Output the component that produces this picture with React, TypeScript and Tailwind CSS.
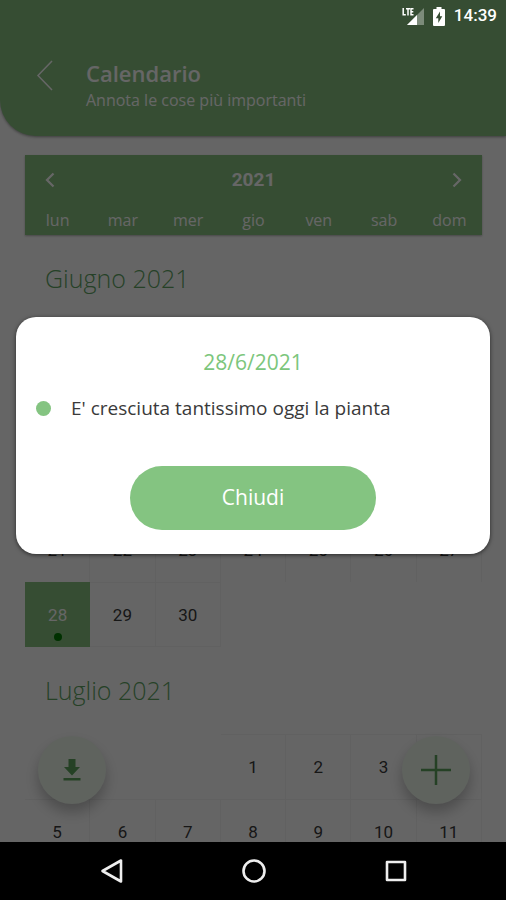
const WEEKDAYS = ["lun", "mar", "mer", "gio", "ven", "sab", "dom"];

type Month = { name: string; offset: number; days: number; selected?: number };

const MONTHS: Month[] = [
  { name: "Giugno 2021", offset: 1, days: 30, selected: 28 },
  { name: "Luglio 2021", offset: 3, days: 31 },
];

function weeksOf(month: Month): (number | null)[][] {
  const rows = Math.ceil((month.offset + month.days) / 7);
  return Array.from({ length: rows }, (_, row) =>
    Array.from({ length: 7 }, (_, col) => {
      const day = row * 7 + col - month.offset + 1;
      return day >= 1 && day <= month.days ? day : null;
    }),
  );
}

function StatusBar() {
  return (
    <div className="absolute inset-x-0 top-0 z-20 flex h-8 items-center justify-end gap-[9px] pr-[9px] text-white">
      <svg width="22" height="19" viewBox="0 0 22 19" aria-label="LTE" role="img">
        <path d="M22 1v17H5z" fill="#fff" fillOpacity="0.35" />
        <path d="M15 8v10H5z" fill="#fff" />
        <path d="M1.200 1v6.800h2.600M4 1.700h4M6 1.700v6.900M11.500 1.700H9v6.100h2.500M9 4.700h2.300" fill="none" stroke="#fff" strokeWidth="1.500" />
      </svg>
      <svg width="12" height="19" viewBox="0 0 12 19" aria-label="Batteria in carica" role="img">
        <path d="M3.500 0h5v2H11q1 0 1 1v15q0 1-1 1H1q-1 0-1-1V3q0-1 1-1h2.500z" fill="#fff" />
        <path d="M7 4.500 2.800 11.300h2.500v4.700l4-6.800H7z" fill="#364d33" />
      </svg>
      <span className="font-[Roboto] text-[17px] font-medium">14:39</span>
    </div>
  );
}

function Header() {
  return (
    <header className="flex h-[136px] shrink-0 items-start rounded-bl-[36px] bg-[#87c180] pt-[60px] pl-9 text-white shadow-[0_1px_3px_rgba(0,0,0,0.4)]">
      <button type="button" aria-label="Indietro" className="mr-8 h-8 w-[18px]">
        <svg width="18" height="32" viewBox="0 0 18 32" fill="none" stroke="currentColor" strokeWidth="1.500">
          <path d="M16 1 2 15.500 16 30" />
        </svg>
      </button>
      <div>
        <h1 className="text-[22px] leading-[26px] font-semibold">Calendario</h1>
        <p className="text-base leading-7">Annota le cose più importanti</p>
      </div>
    </header>
  );
}

function MonthTable({ month }: { month: Month }) {
  const weeks = weeksOf(month);
  return (
    <section>
      <h2 className="flex h-[87px] items-center pl-5 text-[25px] font-light text-[#5fa463]">{month.name}</h2>
      <table
        aria-label={month.name}
        className="w-full table-fixed border-separate border-spacing-0 font-[Roboto] text-[17px] text-[#3a3a3a]"
      >
        <tbody>
          {weeks.map((week, i) => (
            <tr key={i}>
              {week.map((day, j) => (
                <td
                  key={j}
                  className={
                    day === null
                      ? "h-[65px] p-0"
                      : day === month.selected
                        ? "h-[65px] bg-[#87c180] p-0 text-white"
                        : "h-[65px] border-t border-r border-[#f2f2f2] p-0"
                  }
                >
                  {day !== null && (
                    <button
                      type="button"
                      className={
                        i === weeks.length - 1 && day !== month.selected
                          ? "block h-16 w-full border-b border-[#f2f2f2] pt-0.5 text-center"
                          : "relative block h-16 w-full pt-0.5 text-center"
                      }
                    >
                      {day}
                      {day === month.selected && (
                        <span className="absolute bottom-1.5 left-1/2 size-2 -translate-x-1/2 rounded-full bg-[#007a00]" />
                      )}
                    </button>
                  )}
                </td>
              ))}
            </tr>
          ))}
        </tbody>
      </table>
    </section>
  );
}

function Calendar() {
  return (
    <main className="mt-[19px] pr-6 pl-[25px]">
      <div className="flex h-20 flex-col bg-[#87c180] text-white shadow-[0_1px_2px_rgba(0,0,0,0.3)]">
        <div className="flex h-[50px] items-center justify-between px-[18px]">
          <button type="button" aria-label="Anno precedente">
            <svg width="14" height="18" viewBox="0 0 14 18" fill="none" stroke="currentColor" strokeWidth="2.200">
              <path d="M10.500 2.500 4 9l6.500 6.500" />
            </svg>
          </button>
          <span className="font-[Roboto] text-[19px] font-bold">2021</span>
          <button type="button" aria-label="Anno successivo">
            <svg width="14" height="18" viewBox="0 0 14 18" fill="none" stroke="currentColor" strokeWidth="2.200">
              <path d="M3.500 2.500 10 9l-6.500 6.500" />
            </svg>
          </button>
        </div>
        <div className="grid h-[30px] grid-cols-7 items-center text-center text-base leading-[30px]">
          {WEEKDAYS.map((d) => (
            <span key={d}>{d}</span>
          ))}
        </div>
      </div>
      {MONTHS.map((m) => (
        <MonthTable key={m.name} month={m} />
      ))}
    </main>
  );
}

function FloatingActions() {
  return (
    <div className="absolute inset-x-0 bottom-[38px] flex justify-between pr-9 pl-[38px] text-[#5ca45c]">
      <button type="button" aria-label="Scarica" className="flex size-[68px] items-center justify-center rounded-full bg-[#eef7ec] shadow-[0_8px_14px_rgba(0,0,0,0.25)]">
        <svg width="18" height="22" viewBox="0 0 18 22" fill="currentColor">
          <path d="M5.500 0h7v8H17l-8 8.500L1 8h4.500zM.5 19h17v2.500H.5z" />
        </svg>
      </button>
      <button type="button" aria-label="Aggiungi" className="flex size-[68px] items-center justify-center rounded-full bg-[#eef7ec] shadow-[0_8px_14px_rgba(0,0,0,0.25)]">
        <svg width="30" height="30" viewBox="0 0 30 30" fill="none" stroke="currentColor" strokeWidth="2.500">
          <path d="M15 0v30M0 15h30" />
        </svg>
      </button>
    </div>
  );
}

function NoteDialog() {
  return (
    <div className="absolute inset-0 z-10 flex items-center bg-black/60 px-4 pt-[29px]">
      <div
        role="dialog"
        aria-modal="true"
        aria-labelledby="note-date"
        className="flex w-full flex-col items-center rounded-[20px] bg-white px-5 pt-[29px] pb-6 shadow-[0_1px_4px_rgba(0,0,0,0.6)]"
      >
        <h2 id="note-date" className="text-[21px] leading-8 text-[#7cc67c]">
          28/6/2021
        </h2>
        <ul className="mt-4 w-full">
          <li className="flex items-center gap-5 text-[19px] leading-7 text-[#3a3a3a]">
            <span className="size-[15px] rounded-full bg-[#84c481]" />
            E' cresciuta tantissimo oggi la pianta
          </li>
        </ul>
        <button type="button" className="mt-11 h-16 w-[246px] rounded-full bg-[#84c481] text-[21px] text-white">
          Chiudi
        </button>
      </div>
    </div>
  );
}

function NavigationBar() {
  return (
    <nav className="flex h-[58px] shrink-0 items-center justify-center gap-[118px] bg-black pl-0.5 text-[#eee]">
      <button type="button" aria-label="Indietro">
        <svg width="24" height="26" viewBox="0 0 24 26" fill="none" stroke="currentColor" strokeWidth="2.600" strokeLinejoin="round">
          <path d="M21 2.500v21L2.500 13z" />
        </svg>
      </button>
      <button type="button" aria-label="Home">
        <svg width="24" height="26" viewBox="0 0 24 26" fill="none" stroke="currentColor" strokeWidth="2.600">
          <circle cx="12" cy="13" r="10.500" />
        </svg>
      </button>
      <button type="button" aria-label="Recenti">
        <svg width="24" height="26" viewBox="0 0 24 26" fill="none" stroke="currentColor" strokeWidth="2.600" strokeLinejoin="round">
          <rect x="3" y="4" width="18" height="18" />
        </svg>
      </button>
    </nav>
  );
}

export default function App() {
  return (
    <div className="flex h-screen flex-col font-['Open_Sans','Noto_Sans',sans-serif]">
      <div className="relative flex-1 overflow-hidden bg-[#fdfdfd]">
        <StatusBar />
        <Header />
        <Calendar />
        <FloatingActions />
        <NoteDialog />
      </div>
      <NavigationBar />
    </div>
  );
}
